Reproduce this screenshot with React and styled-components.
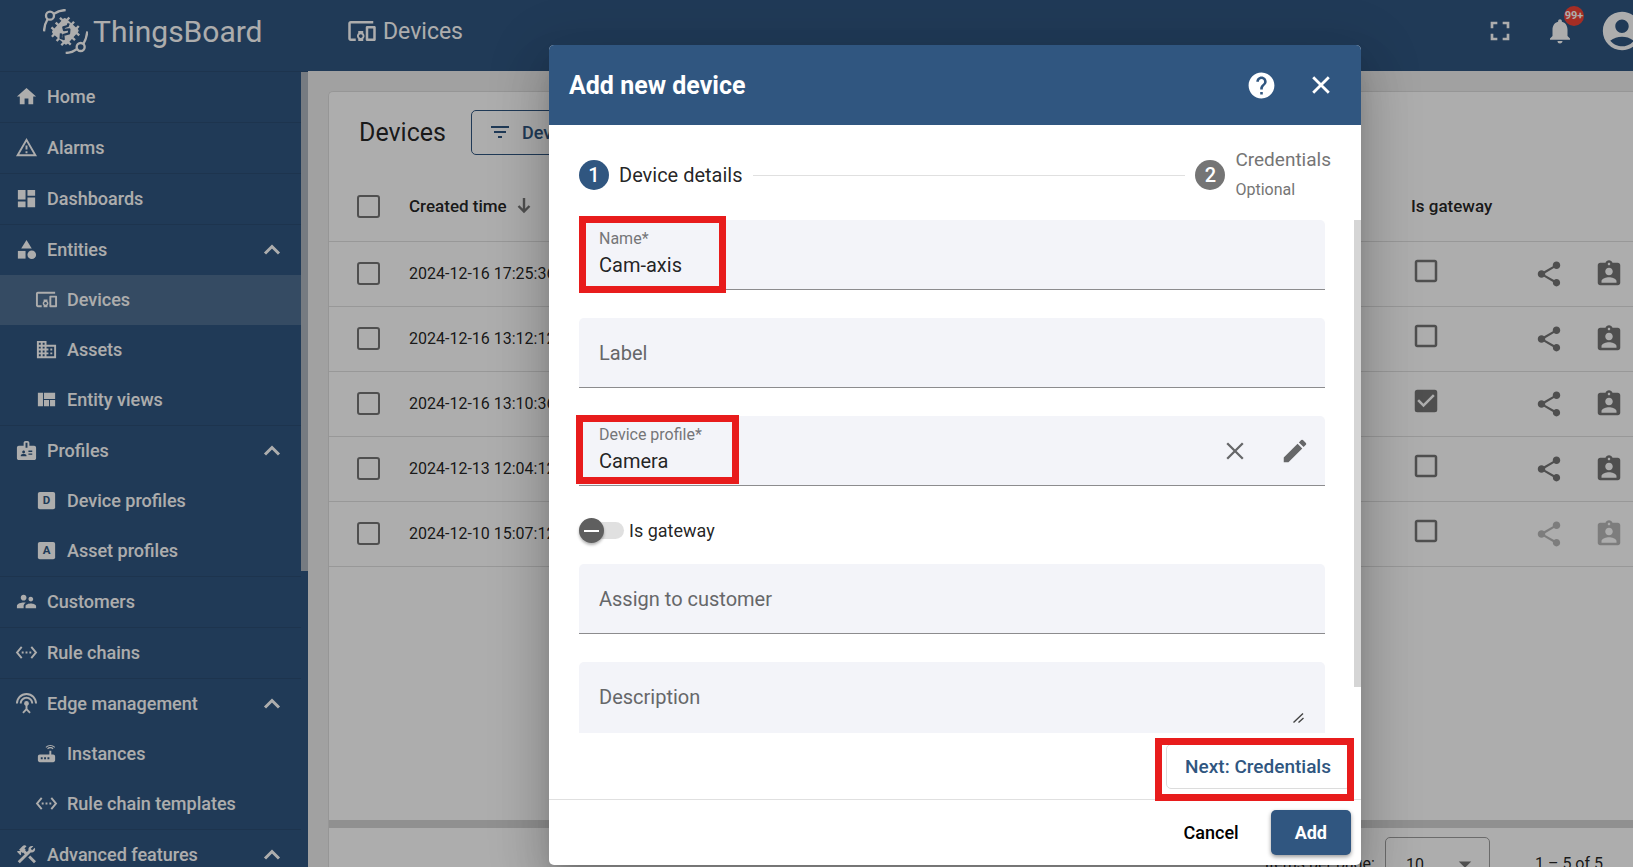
import React, { useState } from "react";
import styled, { createGlobalStyle, css } from "styled-components";
import {
  MdHome, MdDashboard, MdCategory, MdDevicesOther, MdDomain, MdViewQuilt, MdBadge,
  MdSupervisorAccount, MdSettingsEthernet, MdSettingsInputAntenna, MdRouter,
  MdConstruction, MdFullscreen, MdNotifications, MdAccountCircle,
  MdFilterList, MdShare, MdAssignmentInd, MdHelp, MdEdit,
  MdCheckBox, MdCheckBoxOutlineBlank, MdArrowDropDown,
} from "react-icons/md";

const PRIMARY = "#305680";

const GlobalStyle = createGlobalStyle`
  * { box-sizing: border-box; }
  body {
    margin: 0;
    overflow: hidden;
    font-family: Roboto, "Liberation Sans", sans-serif;
    color: rgba(0, 0, 0, 0.87);
  }
  button, input, textarea, select { font: inherit; color: inherit; }
  button { cursor: pointer; }
  svg { display: block; flex: none; }
`;

const Shell = styled.div`
  position: relative;
  display: flex;
  height: 100vh;
  overflow: hidden;
  background: #eee;
`;

/* ---------- sidebar ---------- */

const Sidebar = styled.aside`
  display: flex;
  flex-direction: column;
  flex: 0 0 308px;
  background: ${PRIMARY};
  color: #fff;
`;

const Brand = styled.div`
  display: flex;
  align-items: center;
  gap: 5px;
  flex: 0 0 72px;
  padding: 0 0 9px 43px;
  font-size: 30px;
  border-bottom: 1px solid #2b4d73;
`;

const MenuArea = styled.div`
  display: flex;
  flex: 1;
  min-height: 0;
  overflow: hidden;
`;

const Menu = styled.nav`
  flex: 1;
`;

const MenuSection = styled.div`
  border-bottom: 1px solid #2b4d73;
`;

const MenuLink = styled.a`
  display: flex;
  align-items: center;
  gap: 9px;
  height: 50px;
  padding: 0 20px 2px ${(p) => (p.$nested ? 35 : 15)}px;
  color: #fff;
  font-size: 18px;
  font-weight: 500;
  text-decoration: none;
  background: ${(p) => (p.$active ? "rgba(255, 255, 255, 0.15)" : "transparent")};
  & > svg:first-child { width: 23px; height: 23px; }
`;

const MenuText = styled.span`
  flex: 1;
`;

const ScrollThumb = styled.div`
  width: 7px;
  height: ${(p) => p.$length};
  background: ${(p) => p.$color};
`;

/* ---------- main ---------- */

const Main = styled.main`
  display: flex;
  flex-direction: column;
  flex: 1;
  min-width: 0;
`;

const Toolbar = styled.header`
  display: flex;
  align-items: center;
  flex: 0 0 71px;
  padding: 0 0 9px 39px;
  overflow: hidden;
  color: #fff;
  background: ${PRIMARY};
`;

const PageTitle = styled.h1`
  flex: 1;
  display: flex;
  align-items: center;
  gap: 6px;
  margin: 0;
  font-size: 23px;
  font-weight: 400;
`;

const IconButton = styled.button`
  position: relative;
  display: flex;
  align-items: center;
  justify-content: center;
  width: 60px;
  height: 60px;
  flex: none;
  padding: 0;
  border: 0;
  background: none;
`;

const AvatarButton = styled(IconButton)`
  width: 44px;
  margin: 0 0 0 9px;
  justify-content: flex-start;
`;

const ToolbarActions = styled.div`
  display: flex;
  align-items: center;
  margin-right: -10px;
`;

const Badge = styled.span`
  position: absolute;
  top: 5px;
  left: 34px;
  width: 20px;
  height: 20px;
  border-radius: 50%;
  background: #f44336;
  font-size: 11px;
  line-height: 20px;
  font-weight: 700;
  text-align: center;
`;

const Card = styled.section`
  display: flex;
  flex-direction: column;
  flex: 1;
  min-height: 0;
  margin: 20px 0 0 20px;
  border: 1px solid #dedede;
  border-width: 1px 0 0 1px;
  border-radius: 5px 0 0 0;
  background: #fff;
`;

const CardHeader = styled.div`
  display: flex;
  align-items: center;
  gap: 25px;
  height: 80px;
  padding-left: 30px;
`;

const CardTitle = styled.h2`
  margin: 0;
  font-size: 25px;
  font-weight: 400;
`;

const FilterButton = styled.button`
  display: flex;
  align-items: center;
  gap: 10px;
  height: 45px;
  padding: 0 20px 0 16px;
  border: 1px solid ${PRIMARY};
  border-radius: 5px;
  background: none;
  color: ${PRIMARY};
  font-size: 18px;
  font-weight: 500;
`;

const TableArea = styled.div`
  flex: 1;
  min-height: 0;
  overflow: hidden;
  border-bottom: 8px solid #d4d4d4;
`;

const Table = styled.table`
  width: 100%;
  table-layout: fixed;
  border-collapse: collapse;
`;

const Column = styled.col`
  width: ${(p) => p.$width};
`;

const cell = css`
  padding: 0;
  border-bottom: 1px solid #e0e0e0;
  text-align: left;
  white-space: nowrap;
`;

const HeadCell = styled.th`
  ${cell}
  height: 69px;
  font-size: 17px;
  font-weight: 500;
`;

const Cell = styled.td`
  ${cell}
  height: 65px;
  font-size: 16px;
`;

const SelectBox = styled.input`
  appearance: none;
  display: block;
  width: 23px;
  height: 23px;
  margin: 0 0 0 28px;
  border: 2px solid #757575;
  border-radius: 3px;
`;

const SortLabel = styled.span`
  display: flex;
  align-items: center;
  gap: 10px;
`;

const Flag = styled.span`
  display: block;
  padding-bottom: 6px;
  color: #757575;
`;

const RowActions = styled.div`
  display: flex;
  color: #757575;
  opacity: ${(p) => (p.$disabled ? 0.5 : 1)};
`;

const Paginator = styled.div`
  display: flex;
  align-items: flex-start;
  justify-content: flex-end;
  height: 39px;
  padding: 9px 30px 0 0;
  font-size: 16px;
  line-height: 54px;
`;

const PageSize = styled.span`
  position: relative;
  width: 105px;
  margin: 0 45px 0 10px;
  & > svg {
    position: absolute;
    top: 12px;
    right: 10px;
    color: #757575;
  }
`;

const PageSizeSelect = styled.select`
  appearance: none;
  display: block;
  width: 100%;
  height: 54px;
  padding-left: 20px;
  border: 1px solid #9e9e9e;
  border-radius: 5px;
  background: none;
`;

/* ---------- dialog ---------- */

const Backdrop = styled.div`
  position: absolute;
  inset: 0;
  display: grid;
  grid-template-columns: 549fr 812fr 272fr;
  align-items: start;
  padding-top: 45px;
  background: rgba(0, 0, 0, 0.32);
`;

const Dialog = styled.div`
  grid-column: 2;
  min-width: 0;
  border-radius: 5px;
  background: #fff;
  box-shadow: 0 14px 19px -9px rgba(0, 0, 0, 0.2), 0 30px 48px 4px rgba(0, 0, 0, 0.14),
    0 11px 58px 10px rgba(0, 0, 0, 0.12);
`;

const DialogHeader = styled.div`
  display: flex;
  align-items: center;
  height: 80px;
  padding: 0 10px 0 20px;
  border-radius: 5px 5px 0 0;
  background: ${PRIMARY};
  color: #fff;
`;

const DialogTitle = styled.h2`
  flex: 1;
  margin: 0;
  font-size: 25px;
  font-weight: 700;
`;

const Stepper = styled.div`
  display: flex;
  align-items: center;
  gap: 10px;
  height: 95px;
  padding: 5px 30px 0;
`;

const StepNumber = styled.span`
  width: 30px;
  height: 30px;
  border-radius: 50%;
  background: ${(p) => (p.$active ? PRIMARY : "#757575")};
  color: #fff;
  font-size: 20px;
  font-weight: 500;
  line-height: 30px;
  text-align: center;
`;

const StepLabel = styled.span`
  font-size: ${(p) => (p.$active ? 20 : 19)}px;
  line-height: 30px;
  color: ${(p) => (p.$active ? "rgba(0, 0, 0, 0.87)" : "#757575")};
`;

const StepHint = styled.small`
  display: block;
  font-size: 16px;
`;

const StepLine = styled.span`
  flex: 1;
  height: 1px;
  background: #e0e0e0;
`;

const FormArea = styled.div`
  display: flex;
  padding-left: 30px;
`;

const Form = styled.form`
  flex: 1;
  min-width: 0;
  margin-right: 29px;
`;

const Field = styled.div`
  position: relative;
  display: flex;
  align-items: center;
  height: 70px;
  margin-bottom: ${(p) => (p.$last ? 0 : 28)}px;
  padding: 0 20px;
  border-bottom: 1px solid #8c8c8e;
  border-radius: 5px 5px 0 0;
  background: #f3f4f9;
`;

const FieldBody = styled.div`
  display: flex;
  flex-direction: column;
  flex: 1;
`;

const FieldLabel = styled.label`
  color: #757678;
  font-size: 16px;
  line-height: 20px;
`;

const fieldText = css`
  width: 100%;
  padding: 0;
  border: 0;
  outline: 0;
  background: none;
  font-size: 20px;
  &::placeholder { color: #666769; opacity: 1; }
`;

const TextInput = styled.input`
  ${fieldText}
  height: 32px;
`;

const TextArea = styled.textarea`
  ${fieldText}
  display: block;
  height: 43px;
  line-height: 30px;
  resize: none;
`;

const NoteField = styled(Field)`
  align-items: flex-start;
  height: 71px;
  padding-top: 20px;
  border-bottom: 0;
  & > svg {
    position: absolute;
    right: 21px;
    bottom: 10px;
  }
`;

const FieldButton = styled(IconButton)`
  color: #666769;
  &:last-child { margin-right: -20px; }
`;

const ToggleRow = styled.label`
  display: flex;
  align-items: center;
  gap: 5px;
  height: 50px;
  margin: -28px 0 28px;
  padding-top: 39px;
`;

const Toggle = styled.input`
  appearance: none;
  display: flex;
  align-items: center;
  width: 45px;
  height: 17px;
  margin: 0;
  border-radius: 9px;
  background: #e0e0e0;
  &::before {
    content: "";
    width: 25px;
    height: 25px;
    flex: none;
    border-radius: 50%;
    background: linear-gradient(#fff, #fff) center / 15px 2px no-repeat #5f5f5f;
    box-shadow: 0 2px 3px rgba(0, 0, 0, 0.3);
  }
`;

const ToggleText = styled.span`
  font-size: 18px;
  line-height: 22px;
`;

const StepActions = styled.div`
  position: relative;
  display: flex;
  justify-content: flex-end;
  padding: 11px 10px 10px;
`;

const NextButton = styled.button`
  height: 45px;
  padding: 0 19px 0 18px;
  border: 1px solid #dcdcdc;
  border-radius: 5px;
  background: #fff;
  color: ${PRIMARY};
  font-size: 19px;
  font-weight: 500;
`;

const DialogFooter = styled.div`
  display: flex;
  justify-content: flex-end;
  gap: 12px;
  padding: 10px;
  border-top: 1px solid #e0e0e0;
`;

const DialogButton = styled.button`
  height: 45px;
  padding: 0 ${(p) => (p.$primary ? 24 : 20)}px;
  border: 0;
  border-radius: 5px;
  font-size: 18px;
  font-weight: ${(p) => (p.$primary ? 700 : 500)};
  background: ${(p) => (p.$primary ? PRIMARY : "none")};
  color: ${(p) => (p.$primary ? "#fff" : "#000")};
  box-shadow: ${(p) => (p.$primary ? "0 2px 4px rgba(0, 0, 0, 0.4)" : "none")};
`;

/* Red frame laid over the part of the form the reader should look at. */
const Highlight = styled.span`
  position: absolute;
  top: ${(p) => p.$top}px;
  left: ${(p) => p.$left};
  right: ${(p) => p.$right};
  width: ${(p) => p.$width}px;
  height: ${(p) => p.$height}px;
  border: 7px solid #e81c1c;
  pointer-events: none;
`;

/* ---------- icons ---------- */

function Logo() {
  return (
    <svg width="45" height="45" viewBox="0 0 135 135" fill="none" stroke="#fff" strokeWidth="7">
      <circle cx="21" cy="20" r="12" />
      <circle cx="113" cy="114" r="12" />
      <path d="M33 14Q48 4 68 3M14 30Q4 46 3 67M121 105Q131 88 133 67M102 120Q88 131 68 132" />
      <g transform="rotate(42 67 67)">
        <rect x="37" y="37" width="60" height="60" rx="6" fill="#fff" stroke="none" />
        <path d="M48 28V106M67 28V106M86 28V106M28 48H106M28 67H106M28 86H106" />
      </g>
      <path d="M77 43L74 51L61 55L63 63L79 61L78 73L61 78L62 90L53 87L54 73" stroke={PRIMARY} strokeWidth="7" strokeLinejoin="round" />
    </svg>
  );
}

function AlertOutline() {
  return (
    <svg viewBox="0 0 24 24" fill="currentColor">
      <path d="M12,2L1,21H23M12,6L19.53,19H4.47M11,10V14H13V10M11,16V18H13V16" />
    </svg>
  );
}

function LetterBox({ letter }) {
  return (
    <svg viewBox="0 0 24 24" fill="currentColor">
      <rect x="3" y="3" width="18" height="18" rx="2" />
      <text x="12" y="16" textAnchor="middle" fontFamily="Roboto" fontWeight="700" fontSize="12" fill={PRIMARY}>
        {letter}
      </text>
    </svg>
  );
}

function ChevronUp() {
  return (
    <svg width="18" height="18" viewBox="0 0 18 18" fill="none" stroke="currentColor" strokeWidth="3">
      <path d="M2 13.5L9 6.5L16 13.5" />
    </svg>
  );
}

function SortArrow() {
  return (
    <svg width="14" height="16" viewBox="0 0 14 16" fill="none" stroke="#757575" strokeWidth="2.4">
      <path d="M7 0V14M1.5 8L7 13.5L12.5 8" />
    </svg>
  );
}

function Cross({ weight }) {
  return (
    <svg width="18" height="18" viewBox="0 0 18 18" stroke="currentColor" strokeWidth={weight}>
      <path d="M1.2 1.2L16.8 16.8M16.8 1.2L1.2 16.8" />
    </svg>
  );
}

function ResizeGrip() {
  return (
    <svg width="11" height="10" viewBox="0 0 11 10" stroke="#444" strokeWidth="1.4">
      <path d="M0.5 9.5L10 0.5M5.5 9.5L10.5 5" />
    </svg>
  );
}

const sections = [
  [{ icon: <MdHome />, text: "Home" }],
  [{ icon: <AlertOutline />, text: "Alarms" }],
  [{ icon: <MdDashboard />, text: "Dashboards" }],
  [
    { icon: <MdCategory />, text: "Entities" },
    { icon: <MdDevicesOther />, text: "Devices", active: true },
    { icon: <MdDomain />, text: "Assets" },
    { icon: <MdViewQuilt />, text: "Entity views" },
  ],
  [
    { icon: <MdBadge />, text: "Profiles" },
    { icon: <LetterBox letter="D" />, text: "Device profiles" },
    { icon: <LetterBox letter="A" />, text: "Asset profiles" },
  ],
  [{ icon: <MdSupervisorAccount />, text: "Customers" }],
  [{ icon: <MdSettingsEthernet />, text: "Rule chains" }],
  [
    { icon: <MdSettingsInputAntenna />, text: "Edge management" },
    { icon: <MdRouter />, text: "Instances" },
    { icon: <MdSettingsEthernet />, text: "Rule chain templates" },
  ],
  [{ icon: <MdConstruction />, text: "Advanced features", expanded: true }],
];

const devices = [
  { created: "2024-12-16 17:25:36" },
  { created: "2024-12-16 13:12:12" },
  { created: "2024-12-16 13:10:36", gateway: true },
  { created: "2024-12-13 12:04:12" },
  { created: "2024-12-10 15:07:12", disabled: true },
];

function SideNav() {
  return (
    <Sidebar>
      <Brand><Logo />ThingsBoard</Brand>
      <MenuArea>
        <Menu>
          {sections.map((items) => (
            <MenuSection key={items[0].text}>
              {items.map((item, i) => (
                <MenuLink key={item.text} href="#" $nested={i > 0} $active={item.active}>
                  {item.icon}
                  <MenuText>{item.text}</MenuText>
                  {i === 0 && (items.length > 1 || item.expanded) && <ChevronUp />}
                </MenuLink>
              ))}
            </MenuSection>
          ))}
        </Menu>
        <ScrollThumb $length="499px" $color="#afb5be" />
      </MenuArea>
    </Sidebar>
  );
}

function DeviceTable() {
  return (
    <Table>
      <colgroup>
        <Column $width="80px" />
        <Column $width="auto" />
        <Column $width="108px" />
        <Column $width="114px" />
      </colgroup>
      <thead>
        <tr>
          <HeadCell><SelectBox type="checkbox" aria-label="Select all" /></HeadCell>
          <HeadCell><SortLabel>Created time<SortArrow /></SortLabel></HeadCell>
          <HeadCell>Is gateway</HeadCell>
          <HeadCell />
        </tr>
      </thead>
      <tbody>
        {devices.map((d) => (
          <tr key={d.created}>
            <Cell><SelectBox type="checkbox" aria-label={`Select ${d.created}`} /></Cell>
            <Cell>{d.created}</Cell>
            <Cell>
              <Flag>{d.gateway ? <MdCheckBox size={30} /> : <MdCheckBoxOutlineBlank size={30} />}</Flag>
            </Cell>
            <Cell>
              <RowActions $disabled={d.disabled}>
                <IconButton aria-label="Share"><MdShare size={30} /></IconButton>
                <IconButton aria-label="Assign"><MdAssignmentInd size={30} /></IconButton>
              </RowActions>
            </Cell>
          </tr>
        ))}
      </tbody>
    </Table>
  );
}

function AddDeviceDialog() {
  const [name, setName] = useState("Cam-axis");
  const [profile, setProfile] = useState("Camera");
  return (
    <Backdrop>
      <Dialog role="dialog" aria-labelledby="dialog-title">
        <DialogHeader>
          <DialogTitle id="dialog-title">Add new device</DialogTitle>
          <IconButton aria-label="Help"><MdHelp size={31} /></IconButton>
          <IconButton aria-label="Close"><Cross weight={2.8} /></IconButton>
        </DialogHeader>
        <Stepper>
          <StepNumber $active>1</StepNumber>
          <StepLabel $active>Device details</StepLabel>
          <StepLine />
          <StepNumber>2</StepNumber>
          <StepLabel>Credentials<StepHint>Optional</StepHint></StepLabel>
        </Stepper>
        <FormArea>
          <Form>
            <Field>
              <FieldBody>
                <FieldLabel htmlFor="name">Name*</FieldLabel>
                <TextInput id="name" value={name} onChange={(e) => setName(e.target.value)} />
              </FieldBody>
              <Highlight $top={-4} $left="0" $width={147} $height={77} />
            </Field>
            <Field><TextInput aria-label="Label" placeholder="Label" /></Field>
            <Field>
              <FieldBody>
                <FieldLabel htmlFor="profile">Device profile*</FieldLabel>
                <TextInput id="profile" value={profile} onChange={(e) => setProfile(e.target.value)} />
              </FieldBody>
              <Highlight $top={-1} $left="-3px" $width={163} $height={69} />
              <FieldButton type="button" aria-label="Clear"><Cross weight={2.3} /></FieldButton>
              <FieldButton type="button" aria-label="Edit"><MdEdit size={30} /></FieldButton>
            </Field>
            <ToggleRow><Toggle type="checkbox" role="switch" /><ToggleText>Is gateway</ToggleText></ToggleRow>
            <Field><TextInput aria-label="Assign to customer" placeholder="Assign to customer" /></Field>
            <NoteField $last>
              <TextArea aria-label="Description" placeholder="Description" />
              <ResizeGrip />
            </NoteField>
          </Form>
          <ScrollThumb $length="467px" $color="#d5d5d5" />
        </FormArea>
        <StepActions>
          <NextButton>Next: Credentials</NextButton>
          <Highlight $top={5} $right="7px" $width={199} $height={63} />
        </StepActions>
        <DialogFooter>
          <DialogButton>Cancel</DialogButton>
          <DialogButton $primary>Add</DialogButton>
        </DialogFooter>
      </Dialog>
    </Backdrop>
  );
}

export default function App() {
  return (
    <>
      <GlobalStyle />
      <Shell>
        <SideNav />
        <Main>
          <Toolbar>
            <PageTitle><MdDevicesOther size={30} />Devices</PageTitle>
            <ToolbarActions>
              <IconButton aria-label="Fullscreen"><MdFullscreen size={32} /></IconButton>
              <IconButton aria-label="Notifications"><MdNotifications size={30} /><Badge>99+</Badge></IconButton>
              <AvatarButton aria-label="Account"><MdAccountCircle size={46} /></AvatarButton>
            </ToolbarActions>
          </Toolbar>
          <Card>
            <CardHeader>
              <CardTitle>Devices</CardTitle>
              <FilterButton><MdFilterList size={24} />Device filter</FilterButton>
            </CardHeader>
            <TableArea><DeviceTable /></TableArea>
            <Paginator>
              <label htmlFor="page-size">Items per page:</label>
              <PageSize>
                <PageSizeSelect id="page-size" defaultValue="10"><option>10</option></PageSizeSelect>
                <MdArrowDropDown size={30} />
              </PageSize>
              <span>1 – 5 of 5</span>
            </Paginator>
          </Card>
        </Main>
        <AddDeviceDialog />
      </Shell>
    </>
  );
}
